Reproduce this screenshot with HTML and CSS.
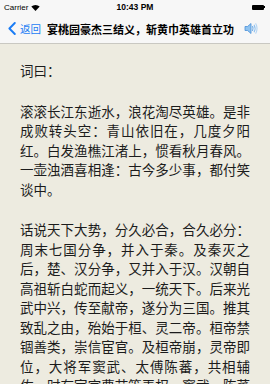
FILE: index.html
```html
<!DOCTYPE html>
<html lang="zh-CN">
<head>
<meta charset="utf-8">
<title>宴桃园豪杰三结义</title>
<link rel="stylesheet" href="styles.css">
</head>
<body>
<div class="screen">
  <div class="status">
    <div class="carrier">Carrier
      <svg class="wifi" width="9" height="7" viewBox="0 0 9 7"><path d="M4.5 7 L0.3 2.6 A6 6 0 0 1 8.7 2.6 Z" fill="#000"/></svg>
    </div>
    <div class="time">10:43 PM</div>
    <div class="battery"><span class="batt-body"></span><span class="batt-nub"></span></div>
  </div>
  <div class="nav">
    <a class="back">
      <svg class="chev" width="8" height="13" viewBox="0 0 8 13"><path d="M6.8 1 L1.4 6.5 L6.8 12" fill="none" stroke="#1a7cf5" stroke-width="1.9" stroke-linecap="round" stroke-linejoin="round"/></svg>
      <span>返回</span>
    </a>
    <div class="title">宴桃园豪杰三结义，斩黄巾英雄首立功</div>
    <svg class="speaker" width="14" height="13" viewBox="0 0 14 13">
      <path d="M1 4.5 H3.5 L7 1.5 V11.5 L3.5 8.5 H1 Z" fill="#8fc3f0" stroke="#4a90d9" stroke-width="0.8" stroke-linejoin="round"/>
      <path d="M8.6 4.6 Q9.6 6.5 8.6 8.4" fill="none" stroke="#6aaae6" stroke-width="1.1" stroke-linecap="round"/>
      <path d="M10.2 3.2 Q12 6.5 10.2 9.8" fill="none" stroke="#8dbfee" stroke-width="1.1" stroke-linecap="round"/>
      <path d="M11.8 1.8 Q14.3 6.5 11.8 11.2" fill="none" stroke="#b3d5f4" stroke-width="1.1" stroke-linecap="round"/>
    </svg>
  </div>
  <div class="content">
    <p>词曰：</p>
    <p>滚滚长江东逝水，浪花淘尽英雄。是非成败转头空：青山依旧在，几度夕阳红。白发渔樵江渚上，惯看秋月春风。一壶浊酒喜相逢：古今多少事，都付笑谈中。</p>
    <p>话说天下大势，分久必合，合久必分：周末七国分争，并入于秦。及秦灭之后，楚、汉分争，又并入于汉。汉朝自高祖斩白蛇而起义，一统天下。后来光武中兴，传至献帝，遂分为三国。推其致乱之由，殆始于桓、灵二帝。桓帝禁锢善类，崇信宦官。及桓帝崩，灵帝即位，大将军窦武、太傅陈蕃，共相辅佐，时有宦官曹节等弄权，窦武、陈蕃谋诛之，机事不密，反为所害，中涓自此愈横。</p>
  </div>
</div>
</body>
</html>
```

FILE: styles.css
```css
html, body {
  margin: 0;
  padding: 0;
  background: #edebe0;
}
.screen {
  width: 270px;
  height: 384px;
  overflow: hidden;
  background: #edebe0;
  font-family: "Noto Sans CJK SC", "Noto Sans", sans-serif;
}
.status {
  height: 14px;
  background: #f7f7f7;
  display: flex;
  align-items: center;
  justify-content: space-between;
  padding: 0 5px 0 4px;
  font-family: "Liberation Sans", Arial, sans-serif;
  font-size: 8px;
  color: #000;
  position: relative;
}
.carrier {
  display: flex;
  align-items: center;
  gap: 3px;
}
.time {
  position: absolute;
  left: 0;
  right: 0;
  text-align: center;
  font-weight: bold;
  font-size: 8.5px;
}
.battery {
  display: flex;
  align-items: center;
}
.batt-body {
  width: 12px;
  height: 5px;
  background: #000;
  border-radius: 1px;
}
.batt-nub {
  width: 1px;
  height: 2px;
  background: #000;
}
.nav {
  height: 29px;
  background: #f7f7f7;
  border-bottom: 1px solid #c9c8c2;
  display: flex;
  align-items: center;
  padding: 0 0 0 8px;
}
.back {
  display: flex;
  align-items: center;
  gap: 4px;
  color: #1a7cf5;
  font-size: 10.5px;
}
.title {
  margin-left: 6px;
  font-size: 11px;
  font-weight: bold;
  color: #000;
  white-space: nowrap;
}
.speaker {
  margin-left: 10px;
}
.content {
  padding: 17px 20px 0;
}
.content p {
  margin: 0 0 21px;
  font-size: 13.5px;
  line-height: 19.5px;
  color: #1c1c1c;
  text-align: justify;
  line-break: strict;
}
```
